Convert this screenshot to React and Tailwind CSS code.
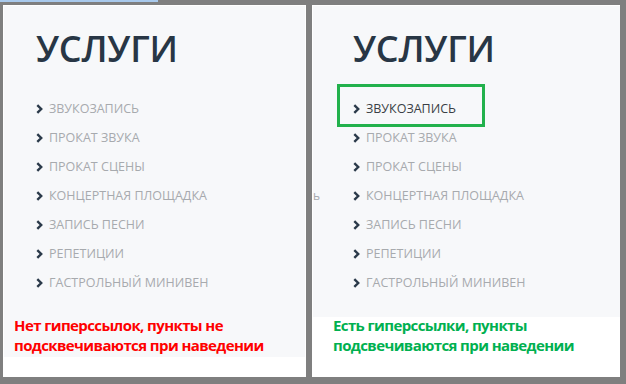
import React from 'react';

const items = [
  'Звукозапись',
  'Прокат звука',
  'Прокат сцены',
  'Концертная площадка',
  'Запись песни',
  'Репетиции',
  'Гастрольный минивен',
];

const Chevron = () => (
  <svg width="7" height="10" viewBox="0 0 7 10" className="shrink-0">
    <path d="M1.3 1.2 L5.2 5 L1.3 8.8" fill="none" stroke="#2b3a4a" strokeWidth="2.4" />
  </svg>
);

const ServiceList = ({ active }) => (
  <ul className="mt-[27px] flex flex-col">
    {items.map((item, i) => (
      <li key={item} className="flex items-center gap-[6px] h-[29px]">
        <Chevron />
        <span
          className={
            'uppercase text-[12.5px] leading-[29px] ' +
            (active && i === 0 ? 'text-[#3a3f45]' : 'text-[#a7aaae]')
          }
        >
          {item}
        </span>
      </li>
    ))}
  </ul>
);

const Title = () => (
  <h2 className="text-[36px] leading-[36px] font-semibold text-[#283645] tracking-[-0.2px]">УСЛУГИ</h2>
);

export default function App() {
  return (
    <div className="w-[626px] h-[384px] bg-[#7f7f7f] flex flex-col font-['Open_Sans',sans-serif]">
      <div className="h-[2px] flex">
        <div className="w-[158px] bg-[#a8c9ec]" />
      </div>

      <div className="flex-1 flex pt-[3px] pl-[3px] pr-[6px] pb-[7px] gap-[6px] min-h-0">
        {/* Без ссылок */}
        <div className="w-[303px] bg-white pt-[1px] pl-[1px] pr-[1px] flex flex-col">
          <div className="h-[351px] bg-[#f7f8fa] flex flex-col">
            <div className="pl-[32px] pt-[25px]">
              <Title />
              <ServiceList />
            </div>
            <p className="mt-[18px] pl-[10px] text-[15px] leading-[20px] font-bold text-[#ff0000] tracking-[-0.6px]">
              Нет гиперссылок, пункты не
              <br />
              подсквечиваются при наведении
            </p>
          </div>
        </div>

        {/* Со ссылками */}
        <div className="relative flex-1 bg-white pt-[1px] pl-[1px] flex flex-col">
          <div className="h-[311px] bg-[#f7f8fa] pl-[40px] pt-[25px]">
            <Title />
            <ServiceList active />
          </div>
          <p className="-mt-[2px] pl-[20px] text-[15px] leading-[20px] font-bold text-[#00b050] tracking-[-0.6px]">
            Есть гиперссылки, пункты
            <br />
            подсвечиваются при наведении
          </p>
          <span className="absolute left-[1px] top-[182px] text-[12px] text-[#a7aaae]">ь</span>
          <div className="absolute left-[25px] top-[79px] w-[148px] h-[43px] border-[3px] border-[#22b14c]" />
        </div>
      </div>
    </div>
  );
}
